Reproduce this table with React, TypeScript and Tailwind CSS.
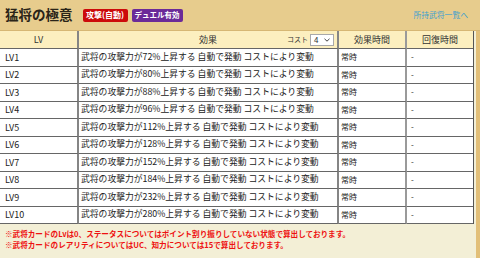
import React from "react";

const rates = [72, 80, 88, 96, 112, 128, 152, 184, 232, 280];

const rows = rates.map((p, i) => ({
  lv: `LV${i + 1}`,
  text: `武将の攻撃力が${p}%上昇する 自動で発動 コストにより変動`,
  time: "常時",
  recover: "-",
}));

export default function App() {
  return (
    <div className="w-[480px] h-[258px] overflow-hidden bg-[#f3efd6] font-['Noto_Sans_CJK_JP',sans-serif] text-[#222]">
      {/* タイトル帯 */}
      <div className="h-[31px] flex items-center px-[5px] bg-[#e7cc8d] border-b border-[#d6b774]">
        <h1 className="text-[13.5px] leading-none font-bold text-[#2a2418] mr-[10px]">猛将の極意</h1>
        <span className="px-[3.5px] h-[13px] flex items-center rounded-[2px] bg-[#cc0a0a] text-white text-[8px] leading-none font-bold mr-[4px]">
          攻撃(自動)
        </span>
        <span className="px-[3px] h-[13px] flex items-center rounded-[2px] bg-[#6b2a98] text-white text-[7.5px] leading-none font-bold">
          デュエル有効
        </span>
        <a className="ml-auto mr-[7px] text-[7.8px] leading-none text-[#3d9fce]">所持武将一覧へ</a>
      </div>

      <div className="flex">
        <div className="w-[476px]">
          <table className="w-[474px] table-fixed border-separate border-spacing-0 border-r border-[#555]">
            <colgroup>
              <col className="w-[79px]" />
              <col className="w-[260px]" />
              <col className="w-[68px]" />
              <col />
            </colgroup>
            <thead>
              <tr>
                <th className="h-[18px] bg-[#fcefbf] border-b border-[#666] border-r-2 border-r-[#858585] text-[9px] font-normal leading-none text-[#333]">
                  LV
                </th>
                <th className="h-[18px] bg-[#fcefbf] border-b border-[#666] border-r-2 border-r-[#858585] text-[9px] font-normal leading-none text-[#333] p-0">
                  <div className="grid grid-cols-[1fr_auto_1fr] items-center">
                    <span />
                    <span>効果</span>
                    <span className="flex items-center justify-end pr-[3px]">
                      <span className="text-[7px] mr-[2px]">コスト</span>
                      <span className="w-[24px] h-[12px] bg-white border border-[#a9a9a9] flex items-center justify-between px-[3px] text-[8px]">
                        4
                        <svg width="6" height="4" viewBox="0 0 6 4" fill="none" stroke="#444" strokeWidth="1">
                          <path d="M0.5 0.8 L3 3.2 L5.5 0.8" />
                        </svg>
                      </span>
                    </span>
                  </div>
                </th>
                <th className="h-[18px] bg-[#fcefbf] border-b border-[#666] border-r-2 border-r-[#9a9a9a] text-[9px] font-normal leading-none text-[#333]">
                  効果時間
                </th>
                <th className="h-[18px] bg-[#fcefbf] border-b border-[#666] text-[9px] font-normal leading-none text-[#333]">
                  回復時間
                </th>
              </tr>
            </thead>
            <tbody>
              {rows.map((r) => (
                <tr key={r.lv}>
                  <td className="h-[17.5px] bg-white border-b border-[#666] border-r-2 border-r-[#858585] pl-[5px] text-[9px] leading-none">
                    {r.lv}
                  </td>
                  <td className="h-[17.5px] bg-white border-b border-[#666] border-r-2 border-r-[#858585] pl-[2px] text-[8.8px] leading-none whitespace-nowrap overflow-hidden">
                    {r.text}
                  </td>
                  <td className="h-[17.5px] bg-white border-b border-[#666] border-r-2 border-r-[#9a9a9a] pl-[2px] text-[8px] leading-none">
                    {r.time}
                  </td>
                  <td className="h-[17.5px] bg-white border-b border-[#666] pl-[4px] text-[8px] leading-none">
                    {r.recover}
                  </td>
                </tr>
              ))}
            </tbody>
          </table>

          {/* 注意書き */}
          <div className="pt-[4px] pl-[5px] text-[7.6px] leading-[11px] font-bold text-[#ee1111]">
            <p>※武将カードのLvは0、ステータスについてはポイント割り振りしていない状態で算出しております。</p>
            <p>※武将カードのレアリティについてはUC、知力については15で算出しております。</p>
          </div>
        </div>
        <div className="w-[4px] self-stretch h-[227px] bg-[#e2bf78]" />
      </div>
    </div>
  );
}
